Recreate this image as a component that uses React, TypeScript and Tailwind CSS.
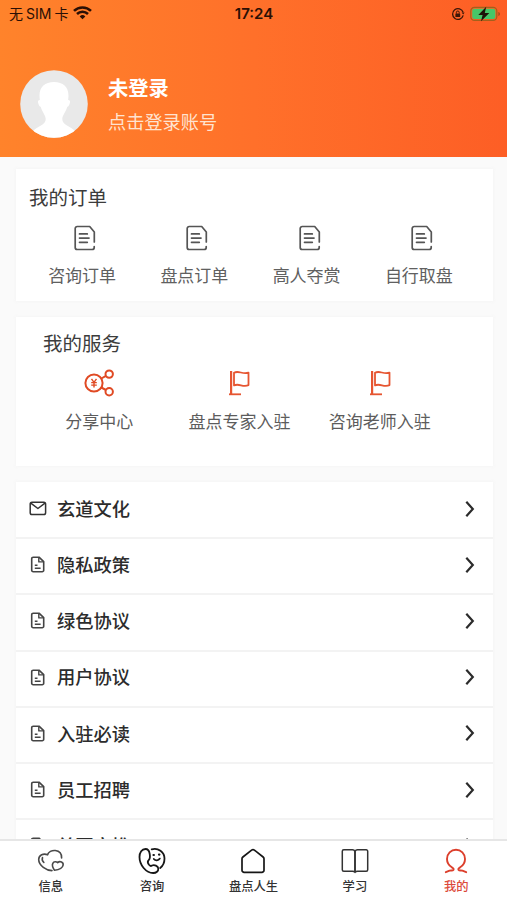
// src/App.tsx

import React from 'react';

// アイコンの型
type IconType = React.FC;

interface Entry {
  label: string;
  icon: IconType;
}

const WifiIcon: React.FC = () => (
  <svg width="19" height="14" viewBox="0 0 19 14" fill="none" stroke="#2a0f05" strokeWidth="2.6">
    <path d="M1 4.9a12.2 12.2 0 0 1 17 0" />
    <path d="M4 8a8 8 0 0 1 11 0" />
    <path d="M9.5 13.2 6.7 10.4a4 4 0 0 1 5.6 0z" fill="#2a0f05" stroke="none" />
  </svg>
);

const LockIcon: React.FC = () => (
  <svg width="14" height="14" viewBox="0 0 14 14" fill="none" stroke="#3a1608" strokeWidth="1.3">
    <path d="M12.1 5.2A5.4 5.4 0 1 0 12.2 8.4" />
    <path d="M10.6 5.4h3l-1.4 2z" fill="#3a1608" stroke="none" />
    <rect x="4.4" y="6.4" width="4.8" height="3.6" rx=".5" fill="#3a1608" stroke="none" />
    <path d="M5.4 6.6V5.4a1.4 1.4 0 0 1 2.8 0v1.2" strokeWidth="1" />
  </svg>
);

const BatteryIcon: React.FC = () => (
  <svg width="31" height="16" viewBox="0 0 31 16" fill="none">
    <rect x=".8" y="1.4" width="26" height="13" rx="3.6" stroke="#a3601c" strokeWidth="1.2" />
    <rect x="2.2" y="2.8" width="23.2" height="10.2" rx="2.2" fill="#46c768" />
    <path d="M28.4 6v4c.9-.3 1.500-1 1.500-2s-.6-1.700-1.500-2z" fill="#a3481c" />
    <path d="M16.200.8 8.300 9h4.300L11 15.200 19.300 7h-4.500z" fill="#1d1208" />
  </svg>
);

const Avatar: React.FC = () => (
  <svg width="68" height="68" viewBox="0 0 68 68">
    <clipPath id="avatar">
      <circle cx="34" cy="34" r="33.800" />
    </clipPath>
    <g clipPath="url(#avatar)">
      <rect width="68" height="68" fill="#e9e9e9" />
      <path
        d="M34 12c-9 0-14.500 5-14.500 13.500 0 2 .2 3 .3 4.500-1.800 0-2.300 1.500-1.500 3.500.6 1.800 1.200 3 2.400 3.300C22 42 25.500 45 25.700 49c.3 6-8.700 7.500-12.700 12L10 68h48l-3-7c-4-4.500-13-6-12.700-12 .2-4 3.700-7 5-12.200 1.200-.3 1.800-1.500 2.400-3.300.8-2 .3-3.500-1.500-3.500.1-1.500.3-2.500.3-4.500C48.500 17 43 12 34 12z"
        fill="#fff"
      />
    </g>
  </svg>
);

const OrderIcon: IconType = () => (
  <svg width="22" height="26" viewBox="0 0 22 26" fill="none" stroke="#555" strokeWidth="1.700" strokeLinecap="round" strokeLinejoin="round">
    <path d="M20.300 17V7l-4.600-5.500H3.200A2 2 0 0 0 1.200 3.500v19a2 2 0 0 0 2 2h15a2 2 0 0 0 2-1.900v-1" />
    <path d="M5.500 8.900h7.800M5.500 13.100h9.500M5.500 17.300h7.800" />
  </svg>
);

const ShareIcon: IconType = () => (
  <svg width="31" height="28" viewBox="0 0 31 28" fill="none" stroke="#e04a24" strokeWidth="2">
    <circle cx="10" cy="14" r="8.600" />
    <circle cx="25.200" cy="5.100" r="3.700" />
    <circle cx="25.200" cy="22.700" r="3.700" />
    <path d="M17.300 9.500l4.700-2.700M17.300 18.500l4.700 2.500" />
    <path d="M7.500 9.900l2.500 3.500 2.500-3.500M10 13.400v5.200M7.200 13.600h5.600M7.200 16.100h5.600" strokeWidth="1.400" />
  </svg>
);

const FlagIcon: IconType = () => (
  <svg width="22" height="26" viewBox="0 0 22 26" fill="none" stroke="#e65531" strokeWidth="1.800" strokeLinejoin="round">
    <path d="M3.100 1v23.500" strokeWidth="2.200" />
    <path d="M1 24.300h12" />
    <path d="M6 2.800c4.500-2.800 8.500 2 14.500-.2v12.500c-5.500 2.600-9.500-2.200-14.500.3z" />
  </svg>
);

const MailIcon: IconType = () => (
  <svg width="18" height="15" viewBox="0 0 18 15" fill="none" stroke="#333" strokeWidth="1.500" strokeLinejoin="round">
    <rect x="1.200" y="1.200" width="15.400" height="12.300" rx="1.800" />
    <path d="M1.800 2.200 8.900 7.500 16 2.200" />
  </svg>
);

const FileIcon: IconType = () => (
  <svg width="18" height="17" viewBox="0 0 18 17" fill="none" stroke="#444" strokeWidth="1.600" strokeLinejoin="round">
    <path d="M10 1.200H4.200a1.500 1.500 0 0 0-1.500 1.500v11.500a1.500 1.500 0 0 0 1.500 1.500h9a1.500 1.500 0 0 0 1.500-1.500V5.700z" />
    <path d="M9.800 1.500v4.400h4.600M5.800 9.200h2.700M5.800 12.200h5.800" strokeWidth="1.400" />
  </svg>
);

const ChevronIcon: React.FC = () => (
  <svg width="10" height="16" viewBox="0 0 10 16" fill="none" stroke="#2b2b2b" strokeWidth="2.200">
    <path d="M1.300.8 7.800 8 1.300 15.200" />
  </svg>
);

const HeartsIcon: IconType = () => (
  <svg width="28" height="26" viewBox="0 0 28 26" fill="none" stroke="#4a4a4a" strokeWidth="1.600" strokeLinecap="round" strokeLinejoin="round">
    <path d="M15 22.600C9.500 22.600 1.700 17.500 1.700 11.600 1.700 7 6.500 5 10.600 6.800 12 .8 25 .2 24.600 10" />
    <path d="M5.500 9.600c-.6 1.800-.2 3.600 1.300 4.800" />
    <path d="M17.500 22.300c-1.700-2.500-2.900-4.700-1.700-6.900 1.100-2 3.400-2 4.900-.8 2.300-2 6-.4 5.400 2.500-.6 3.200-4.600 4.700-8.600 5.200z" />
  </svg>
);

const PhoneIcon: IconType = () => (
  <svg width="28" height="28" viewBox="0 0 28 28" fill="none" stroke="#161616" strokeWidth="1.800" strokeLinecap="round" strokeLinejoin="round">
    <path d="M7.500 2C3.900 2 1.500 5.500 1.500 10c0 8 6.500 16 13.700 16 3.100 0 5.300-2 5.100-4.400-.2-2.700-4.100-4.400-6.300-3-1.300.8-2.200.4-3.200-1-1.200-1.800-1.400-3.200-.3-4.200 1.700-1.600 1.700-4 1.200-6.600C11.200 3.800 9.700 2 7.500 2z" />
    <path d="M13.700 2.300c6.300-2 12.800 2.700 12.800 9.300 0 4.300-1.700 7.500-4.300 9.400" />
    <path d="M15.800 12c1.600 1.900 4.600 1.800 6-.4" />
    <path d="M15.500 8h.4M21 7.600h.4" strokeWidth="2.200" />
  </svg>
);

const HouseIcon: IconType = () => (
  <svg width="26" height="26" viewBox="0 0 26 26" fill="none" stroke="#161616" strokeWidth="1.700" strokeLinejoin="round">
    <path d="M2 10.800c0-.8.3-1.300.9-1.800l8.700-6.900c.9-.7 1.900-.7 2.800 0L23.100 9c.6.500.9 1 .9 1.800v11.400a2.100 2.100 0 0 1-2.100 2.100H4.100A2.100 2.100 0 0 1 2 22.200z" />
  </svg>
);

const BookIcon: IconType = () => (
  <svg width="28" height="26" viewBox="0 0 28 26" fill="none" stroke="#333" strokeWidth="1.500" strokeLinejoin="round">
    <path d="M14 3.700C13.500 2.300 12.800 1.800 11.500 1.800H2.800A1.500 1.500 0 0 0 1.300 3.300v18.400a1.500 1.500 0 0 0 1.500 1.500h8.700c1.300 0 1.800.3 2.500 1.200.7-.9 1.200-1.200 2.500-1.200h8.700a1.500 1.500 0 0 0 1.500-1.500V3.300a1.500 1.500 0 0 0-1.500-1.500h-8.700c-1.300 0-2 .5-2.500 1.900z" />
    <path d="M14 3.500v20.500" strokeWidth="1.900" />
  </svg>
);

const MineIcon: IconType = () => (
  <svg width="24" height="26" viewBox="0 0 24 26" fill="none" stroke="#dc3f2c" strokeWidth="1.900" strokeLinecap="round" strokeLinejoin="round">
    <path d="M1.800 24.200 5.600 22.700C7.300 22.200 8.600 23 9.400 21.900c.8-1.200-.3-1.700-1.600-2.600C5 17.500 3 14.700 3 11c0-5.300 4-9.300 9-9.300s9 4 9 9.300c0 3.700-2 6.500-4.800 8.300-1.300.9-2.400 1.400-1.600 2.600.8 1.100 2.100.3 3.800.8l3.800 1.500" />
  </svg>
);

const orders: Entry[] = [
  { label: '咨询订单', icon: OrderIcon },
  { label: '盘点订单', icon: OrderIcon },
  { label: '高人夺赏', icon: OrderIcon },
  { label: '自行取盘', icon: OrderIcon },
];

const services: Entry[] = [
  { label: '分享中心', icon: ShareIcon },
  { label: '盘点专家入驻', icon: FlagIcon },
  { label: '咨询老师入驻', icon: FlagIcon },
];

const menus: Entry[] = [
  { label: '玄道文化', icon: MailIcon },
  { label: '隐私政策', icon: FileIcon },
  { label: '绿色协议', icon: FileIcon },
  { label: '用户协议', icon: FileIcon },
  { label: '入驻必读', icon: FileIcon },
  { label: '员工招聘', icon: FileIcon },
  { label: '首页文推', icon: FileIcon },
];

const tabs: Entry[] = [
  { label: '信息', icon: HeartsIcon },
  { label: '咨询', icon: PhoneIcon },
  { label: '盘点人生', icon: HouseIcon },
  { label: '学习', icon: BookIcon },
  { label: '我的', icon: MineIcon },
];

const App: React.FC = () => {
  return (
    <div className="flex h-[900px] w-[507px] flex-col overflow-hidden bg-[#fafafa] font-['Liberation_Sans','Noto_Sans_CJK_SC',sans-serif]">
      {/* ヘッダー */}
      <header className="h-[157px] shrink-0 bg-linear-to-r from-[#ff832b] via-[#ff702a] to-[#fd5e25]">
        <div className="grid h-7 grid-cols-3 items-center pr-[6px] pl-[9px] text-[#2a0f05]">
          <div className="flex items-center gap-[7px]">
            <div className="flex items-center gap-[3px] text-[14px] leading-none whitespace-nowrap">
              <span>无</span>
              <span className="font-['Inter','Liberation_Sans',sans-serif] text-[14px]">SIM</span>
              <span>卡</span>
            </div>
            <div className="-mt-[2px] -ml-[2px]">
              <WifiIcon />
            </div>
          </div>
          <div className="pr-[2px] text-center font-['Inter','Liberation_Sans',sans-serif] text-[15px] font-semibold">17:24</div>
          <div className="-mt-[1px] flex items-center justify-end gap-[5px]">
            <LockIcon />
            <BatteryIcon />
          </div>
        </div>
        <div className="mt-[42px] flex items-start pl-5">
          <Avatar />
          <div className="ml-5 flex flex-col pt-[2px] text-white">
            <span className="text-[20.300px] leading-[34px] font-bold">未登录</span>
            <span className="text-[18.200px] leading-[34px] text-[#ffe3d0]">点击登录账号</span>
          </div>
        </div>
      </header>

      <main className="min-h-0 flex-1 overflow-hidden px-4 pt-3">
        {/* 注文 */}
        <section className="h-[132px] w-[477px] bg-white pt-[15px] shadow-[0_0_3px_1px_#f5f5f5]">
          <h2 className="pl-[13px] text-[19.500px] leading-7 text-[#3c3c3c]">我的订单</h2>
          <div className="mt-[13px] ml-[10px] grid w-[449px] grid-cols-4">
            {orders.map(({ label, icon: Icon }) => (
              <div key={label} className="flex flex-col items-center">
                <div className="pl-[6px]">
                  <Icon />
                </div>
                <span className="mt-[14px] text-[17px] leading-6 text-[#606060]">{label}</span>
              </div>
            ))}
          </div>
        </section>

        {/* サービス */}
        <section className="mt-4 h-[149px] w-[477px] bg-white pt-[13px] shadow-[0_0_3px_1px_#f6f6f6]">
          <h2 className="pl-[27px] text-[19.500px] leading-7 text-[#3c3c3c]">我的服务</h2>
          <div className="mt-[11px] ml-[13px] grid w-[421px] grid-cols-3">
            {services.map(({ label, icon: Icon }) => (
              <div key={label} className="flex flex-col items-center">
                <div className="flex h-7 items-center">
                  <Icon />
                </div>
                <span className="mt-[14px] text-[17px] leading-6 whitespace-nowrap text-[#5c5c5c]">{label}</span>
              </div>
            ))}
          </div>
        </section>

        {/* メニュー一覧 */}
        <section className="mt-4 w-[477px] bg-white pt-[1px] shadow-[0_0_3px_1px_#f5f5f5]">
          {menus.map(({ label, icon: Icon }) => (
            <div key={label} className="flex h-[56.200px] items-center border-b-2 border-[#f3f3f3] pr-[18px] pb-[3px] pl-[13px]">
              <Icon />
              <span className="ml-[10px] flex-1 pt-[2px] text-[18.300px] font-medium text-[#2c2c2c]">{label}</span>
              <ChevronIcon />
            </div>
          ))}
        </section>
      </main>

      {/* タブバー */}
      <nav className="grid h-[61px] shrink-0 grid-cols-5 border-t-2 border-[#e6e6e6] bg-white">
        {tabs.map(({ label, icon: Icon }) => (
          <div key={label} className={label === '我的' ? 'flex flex-col items-center pt-[6px] text-[#dc4a3a]' : 'flex flex-col items-center pt-[6px] text-[#333]'}>
            <div className="flex h-7 items-center">
              <Icon />
            </div>
            <span className="mt-[3px] text-[12.300px] leading-[18px] font-medium">{label}</span>
          </div>
        ))}
      </nav>
    </div>
  );
};

export default App;
